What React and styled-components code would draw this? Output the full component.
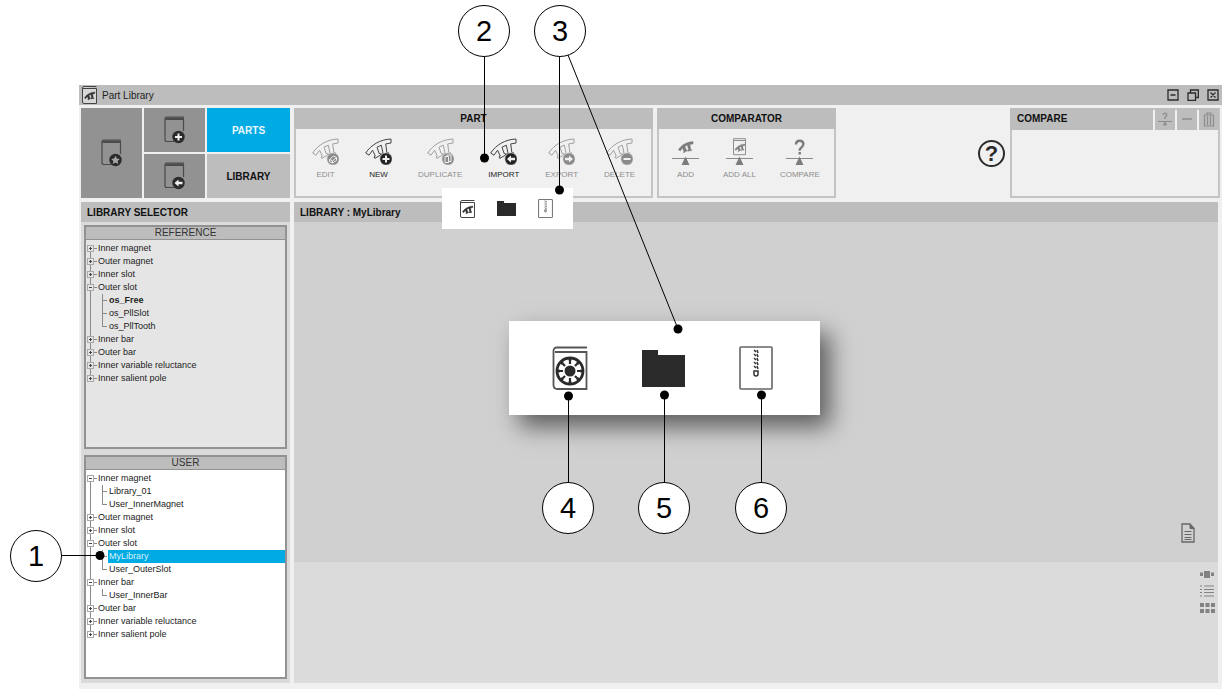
import React, { useState } from 'react';
import styled, { createGlobalStyle, css } from 'styled-components';

const GlobalStyle = createGlobalStyle`
	* {
		box-sizing: border-box;
	}
	body {
		margin: 0;
		background: #fff;
		color: #1c1c1c;
		font-family: 'Liberation Sans', Arial, sans-serif;
		font-size: 10px;
	}
	button {
		font: inherit;
		color: inherit;
		border: 0;
		padding: 0;
		background: none;
		cursor: pointer;
	}
	svg {
		display: block;
		flex: none;
	}
`;

/* page and window */

const Page = styled.div`
	position: relative;
	display: flex;
	flex-direction: column;
	min-height: 100vh;
	padding: 85px 8px 8px 79px;
	overflow: hidden;
`;
const Window = styled.main`
	flex: 1;
	display: flex;
	flex-direction: column;
	background: #f0f0f0;
`;
const TitleBar = styled.header`
	display: flex;
	align-items: center;
	gap: 5px;
	height: 20px;
	padding: 0 3px;
	background: #bdbdbd;
`;
const Title = styled.h1`
	flex: 1;
	margin: 0;
	font-size: 10px;
	font-weight: normal;
`;
const WindowControls = styled.div`
	display: flex;
	gap: 8px;
`;
const TopRow = styled.div`
	display: flex;
	gap: 4px;
	height: 90px;
	margin: 3px 2px 4px;
`;
const Content = styled.div`
	flex: 1;
	display: flex;
	gap: 4px;
	margin: 0 4px 6px 2px;
`;

/* top row */

const Modes = styled.nav`
	flex: none;
	display: grid;
	grid-template-columns: 61px 61px 1fr;
	grid-template-rows: 1fr 1fr;
	gap: 2px;
	width: 209px;
`;
const ModeButton = styled.button`
	display: flex;
	align-items: center;
	justify-content: center;
	background: #929292;
	grid-row: ${({ $tall }) => ($tall ? 'span 2' : 'auto')};
`;
const Tab = styled.button`
	font-weight: bold;
	background: ${({ $active }) => ($active ? '#00aae3' : '#bdbdbd')};
	color: ${({ $active }) => ($active ? '#e8f7fd' : '#111')};
`;
const Panel = styled.section`
	flex: none;
	width: ${({ $width }) => $width}px;
	border: 2px solid #c4c4c4;
`;
const PanelTitle = styled.h2`
	margin: -2px -2px 0;
	background: #bdbdbd;
	font-size: 10px;
	line-height: 21px;
	text-align: center;
	color: #111;
`;
const Tools = styled.div`
	display: flex;
	gap: ${({ $gap }) => $gap}px;
	padding: 9px 13px 0 ${({ $indent }) => $indent}px;
`;
const ToolButton = styled.button`
	display: flex;
	flex-direction: column;
	align-items: center;
	gap: 5px;
	min-width: 27px;
	font-size: 8px;
	line-height: 10px;
	white-space: nowrap;
	color: #222;
	&:disabled {
		color: #8e8e8e;
		cursor: default;
	}
`;
const HelpButton = styled.button`
	align-self: center;
	width: 27px;
	height: 27px;
	margin: 0 1px 0 auto;
	border: 2px solid #2b2b2b;
	border-radius: 50%;
	font-size: 22px;
	font-weight: bold;
	line-height: 23px;
	color: #2b2b2b;
`;
const CompareHeader = styled.div`
	display: flex;
	gap: 2px;
	height: 22px;
	margin: -2px -1px 0 -2px;
`;
const CompareTitle = styled.h2`
	flex: 1;
	margin: 0;
	padding-left: 7px;
	background: #bdbdbd;
	font-size: 10px;
	line-height: 22px;
	color: #111;
`;
const CompareButton = styled.button`
	display: flex;
	align-items: center;
	justify-content: center;
	width: 20px;
	background: #bdbdbd;
	color: #8e8e8e;
`;

/* library selector */

const Sidebar = styled.aside`
	flex: none;
	display: flex;
	flex-direction: column;
	width: 209px;
	background: #dadada;
`;
const SectionTitle = styled.h2`
	height: 20px;
	margin: 0;
	padding-left: 6px;
	background: #bdbdbd;
	font-size: 10px;
	line-height: 21px;
	color: #111;
`;
const Selectors = styled.div`
	flex: 1;
	display: flex;
	flex-direction: column;
	gap: 6px;
	padding: 3px 3px 4px;
`;
const TreeBox = styled.section`
	flex: 1;
	border: 2px solid #929292;
	background: ${({ $bg }) => $bg};
`;
const TreeTitle = styled.h3`
	margin: 0;
	border-bottom: 1px solid #929292;
	background: #bdbdbd;
	font-size: 10px;
	font-weight: normal;
	line-height: 12px;
	text-align: center;
	color: #333;
`;
const list = css`
	margin: 0;
	padding: 0;
	list-style: none;
`;
const Tree = styled.ul`
	${list}
	margin-top: 2px;
	background: linear-gradient(#8a8a8a, #8a8a8a) 4px 6px / 1px calc(100% - 13px) no-repeat;
	font-size: 9px;
`;
const Children = styled.ul`
	${list}
	padding-left: 16px;
`;
const Row = styled.div`
	display: flex;
	align-items: center;
	height: 13px;
`;
const Toggle = styled.button`
	display: flex;
	align-items: center;
	margin-left: 1px;
	svg {
		background: ${({ $bg }) => $bg};
	}
	&::after {
		content: '';
		width: 3px;
		height: 1px;
		background: #8a8a8a;
	}
`;
const Branch = styled.span`
	flex: none;
	width: 6px;
	height: 13px;
	background: linear-gradient(#8a8a8a, #8a8a8a) 0 0 / 1px ${({ $last }) => ($last ? '7px' : '13px')} no-repeat,
		linear-gradient(#8a8a8a, #8a8a8a) 0 6px / 5px 1px no-repeat;
`;
const Label = styled.button`
	flex: 1;
	height: 13px;
	padding-left: 1px;
	line-height: 13px;
	text-align: left;
	white-space: nowrap;
	font-weight: ${({ $bold }) => ($bold ? 'bold' : 'normal')};
	background: ${({ $selected }) => ($selected ? '#00aae3' : 'none')};
	color: ${({ $selected }) => ($selected ? '#d8f2fc' : '#222')};
`;

/* library view */

const Viewer = styled.section`
	flex: 1;
	display: grid;
	grid-template-rows: 20px 340fr 121fr;
`;
const Preview = styled.div`
	display: flex;
	align-items: flex-end;
	justify-content: flex-end;
	padding: 0 23px 19px;
	background: #d0d0d0;
`;
const Shelf = styled.div`
	display: flex;
	flex-direction: column;
	align-items: flex-end;
	gap: 6px;
	padding: 7px 3px;
	background: #dbdbdb;
`;

/* floating import menus and callouts */

const Popup = styled.div`
	position: absolute;
	left: ${({ $x }) => $x}px;
	top: ${({ $y }) => $y}px;
	display: flex;
	align-items: center;
	background: #fff;
`;
const SmallPopup = styled(Popup)`
	gap: 22px;
	width: 131px;
	height: 41px;
	padding-left: 18px;
`;
const LargePopup = styled(Popup)`
	gap: 54px;
	width: 311px;
	height: 94px;
	padding-left: 43px;
	box-shadow: 10px 12px 22px rgba(0, 0, 0, 0.55);
`;
const Leaders = styled.svg`
	position: absolute;
	inset: 0;
	width: 100%;
	height: 100%;
	pointer-events: none;
`;
const Callout = styled.span`
	position: absolute;
	left: ${({ $x }) => $x - 26}px;
	top: ${({ $y }) => $y - 26}px;
	width: 52px;
	height: 52px;
	border: 1px solid #000;
	border-radius: 50%;
	background: #fff;
	font-size: 29px;
	line-height: 51px;
	text-align: center;
	color: #000;
`;

/* icons */

const PART_PATH =
	'M.7 15C6 7 15 1.5 26 1v4L20.7 5.900 21.900 14.900 23.500 14.600 23.800 16.400 16.800 17.700 16.500 15.900 18.100 15.500 16.300 7.200 12 9.200 14.200 15.600 15.100 15.200 15.800 16.900 9.800 20.400 9 18.900 10.300 18.100 7.600 12.200 4 17.200z';

const BADGES = {
	edit: <path d="M17.5 21.5l4-3.5 3 1.5v3l-4 2.5-3-1.3zM17.5 21.5l3 1.3 4-3.3M20.5 22.8V25" fill="none" stroke="#f0f0f0" />,
	plus: <path d="M21 17.5v7M17.5 21h7" stroke="#f0f0f0" strokeWidth="2" />,
	copy: <path d="M18 18.5h3.5v6H18zM20 18.5v-1.5h4v6.5h-2.5" fill="none" stroke="#f0f0f0" />,
	left: <path d="M17 21l4-3.6v2.4h4v2.4h-4v2.4z" fill="#f0f0f0" />,
	right: <path d="M25 21l-4-3.6v2.4h-4v2.4h4v2.4z" fill="#f0f0f0" />,
	minus: <path d="M17.5 21h7" stroke="#f0f0f0" strokeWidth="2" />,
	star: <path d="M21 16.8l1.3 2.8 3 .3-2.2 2 .6 3-2.7-1.5-2.7 1.5.6-3-2.2-2 3-.3z" fill="#a8a8a8" />,
};

const PartIcon = ({ badge, disabled }) => (
	<svg width="27" height="27" viewBox="0 0 27 27">
		<path d={PART_PATH} fill="none" stroke={disabled ? '#a0a0a0' : '#444'} />
		<circle cx="21" cy="21" r="6.2" fill={disabled ? '#8a8a8a' : '#222'} stroke="#f0f0f0" strokeWidth="0.6" />
		{BADGES[badge]}
	</svg>
);

const BookIcon = ({ badge }) => (
	<svg width="22" height="28" viewBox="5 0 22 28">
		<path d="M25 1H7.500Q6 1 6 2.500V23.500Q6 25.500 8 25.500H15M6.500 3.500H24.500V15" fill="none" stroke="#4a4a4a" strokeWidth="1.200" />
		<path d="M7 2.200h18" stroke="#4a4a4a" strokeWidth="1.500" />
		<g transform="translate(-1.500 0)">
			<circle cx="21" cy="21" r="6.200" fill="#2b2b2b" />
			{BADGES[badge]}
		</g>
	</svg>
);

const SmallPart = ({ color = '#333', x = 0, y = 0, scale = 0.4 }) => (
	<path transform={`translate(${x} ${y}) scale(${scale})`} d={PART_PATH} fill={color} stroke={color} strokeWidth="0.700" />
);

const PartBookIcon = () => (
	<svg width="15" height="18" viewBox="0 0 15 18">
		<path d="M14.500 .5H2Q.5 .5 .5 2V16q0 1.500 1.500 1.500H14.500V2.500H1" fill="#fff" fillOpacity="0.400" stroke="#444" />
		<SmallPart x={2} y={5.5} scale={0.42} />
	</svg>
);

const BalanceIcon = ({ kind }) => (
	<svg width="27" height="27" viewBox="0 0 27 27">
		{kind === 'part' && <SmallPart color="#7c7c7c" x={6} y={3} scale={0.58} />}
		{kind === 'book' && (
			<>
				<path d="M7.500 .7h12v16h-12zM7.500 2.500h12" fill="none" stroke="#8e8e8e" />
				<SmallPart color="#7c7c7c" x={8.5} y={5.5} scale={0.4} />
			</>
		)}
		{kind === 'question' && (
			<path d="M10 6.500q0-3.700 3.700-3.700t3.700 3.300q0 2-2 3.300T13.700 12.700M13.700 14v2.500" fill="none" stroke="#7c7c7c" strokeWidth="2.400" />
		)}
		<path d="M0 20.500h27" stroke="#8a8a8a" />
		<path d="M13.500 18.500l4 8.500h-8z" fill="#7c7c7c" />
	</svg>
);

const FolderIcon = ({ width, height }) => (
	<svg width={width} height={height} viewBox="0 0 43 37" preserveAspectRatio="none">
		<path d="M0 0h16v5h27v32H0z" fill="#2a2a2a" />
	</svg>
);

const ZipIcon = ({ width, height, line }) => (
	<svg width={width} height={height} viewBox="0 0 34 44">
		<rect x="1" y="1" width="32" height="42" rx="1" fill="#fff" stroke="#666" strokeWidth={line} />
		<path
			d="M15 4l2 2M18 4l1 3M15 8l2 2M18 8l1 3M15 12l2 2M18 12l1 3M15 16l2 2M18 16l1 3M15 20l2 2M18 20l1 3"
			stroke="#333"
			strokeWidth="1.500"
		/>
		<path d="M15 25h4v3q0 2-2 2t-2-2z" fill="none" stroke="#333" strokeWidth="1.500" />
	</svg>
);

const RotorBookIcon = () => (
	<svg width="36" height="44" viewBox="0 0 36 44">
		<path d="M35 1.500H5Q1.500 1.500 1.500 5V39Q1.500 43 5.500 43H34.500V6H3" fill="none" stroke="#555" strokeWidth="1.800" />
		<circle cx="18" cy="25" r="13" fill="#fff" stroke="#2a2a2a" strokeWidth="2.800" />
		<circle cx="18" cy="25" r="5.500" fill="#2a2a2a" />
		{[0, 45, 90, 135, 180, 225, 270, 315].map((angle) => (
			<path key={angle} d="M18 18v-5M16.500 13.500h3" stroke="#2a2a2a" strokeWidth="2.200" transform={`rotate(${angle} 18 25)`} />
		))}
	</svg>
);

const controls = [
	{ name: 'Minimize', d: 'M1 1h10v10H1zM3.500 6h5' },
	{ name: 'Restore', d: 'M1 4h7.500v7.500H1zM3.500 4V1H11.300V8.500H8.500' },
	{ name: 'Close', d: 'M1 1h10v10H1zM3.500 3.500l5 5M8.500 3.500l-5 5' },
];

const partTools = [
	{ name: 'EDIT', badge: 'edit', disabled: true },
	{ name: 'NEW', badge: 'plus' },
	{ name: 'DUPLICATE', badge: 'copy', disabled: true },
	{ name: 'IMPORT', badge: 'left' },
	{ name: 'EXPORT', badge: 'right', disabled: true },
	{ name: 'DELETE', badge: 'minus', disabled: true },
];

const comparatorTools = [
	{ name: 'ADD', kind: 'part' },
	{ name: 'ADD ALL', kind: 'book' },
	{ name: 'COMPARE', kind: 'question' },
];

const referenceTree = [
	{ name: 'Inner magnet' },
	{ name: 'Outer magnet' },
	{ name: 'Inner slot' },
	{ name: 'Outer slot', children: ['os_Free', 'os_PllSlot', 'os_PllTooth'] },
	{ name: 'Inner bar' },
	{ name: 'Outer bar' },
	{ name: 'Inner variable reluctance' },
	{ name: 'Inner salient pole' },
];

const userTree = [
	{ name: 'Inner magnet', children: ['Library_01', 'User_InnerMagnet'] },
	{ name: 'Outer magnet' },
	{ name: 'Inner slot' },
	{ name: 'Outer slot', children: ['MyLibrary', 'User_OuterSlot'] },
	{ name: 'Inner bar', children: ['User_InnerBar'] },
	{ name: 'Outer bar' },
	{ name: 'Inner variable reluctance' },
	{ name: 'Inner salient pole' },
];

const callouts = [
	{ x: 36, y: 556 },
	{ x: 484, y: 31 },
	{ x: 560, y: 31 },
	{ x: 568, y: 508 },
	{ x: 664, y: 508 },
	{ x: 761, y: 508 },
];

const leaders = [
	[62, 555.5, 100, 555.5],
	[484.5, 57, 484.5, 158],
	[559.5, 57, 559.5, 190],
	[568, 55, 678, 329],
	[568.5, 482, 568.5, 396],
	[664.5, 482, 664.5, 395],
	[761.5, 482, 761.5, 395],
];

const LibraryTree = ({ title, nodes, bg, bold, selected, onSelect }) => (
	<TreeBox $bg={bg}>
		<TreeTitle>{title}</TreeTitle>
		<Tree>
			{nodes.map(({ name, children }) => (
				<li key={name}>
					<Row>
						<Toggle $bg={bg} aria-label={`Toggle ${name}`}>
							<svg width="7" height="7" viewBox="0 0 7 7">
								<rect x="0.5" y="0.5" width="6" height="6" fill="none" stroke="#a8a8a8" />
								<path d={children ? 'M2 3.500h3' : 'M2 3.500h3M3.500 2v3'} stroke="#444" />
							</svg>
						</Toggle>
						<Label>{name}</Label>
					</Row>
					{children && (
						<Children>
							{children.map((child, index) => (
								<li key={child}>
									<Row>
										<Branch $last={index === children.length - 1} />
										<Label $bold={child === bold} $selected={child === selected} onClick={() => onSelect(child)}>
											{child}
										</Label>
									</Row>
								</li>
							))}
						</Children>
					)}
				</li>
			))}
		</Tree>
	</TreeBox>
);

const App = () => {
	const [tab, setTab] = useState('PARTS');
	const [library, setLibrary] = useState('MyLibrary');

	return (
		<Page>
			<GlobalStyle />
			<Window>
				<TitleBar>
					<PartBookIcon />
					<Title>Part Library</Title>
					<WindowControls>
						{controls.map(({ name, d }) => (
							<button key={name} aria-label={name}>
								<svg width="12" height="12" viewBox="0 0 12 12">
									<path d={d} fill="none" stroke="#2b2b2b" strokeWidth="1.300" />
								</svg>
							</button>
						))}
					</WindowControls>
				</TitleBar>

				<TopRow>
					<Modes>
						<ModeButton $tall aria-label="Favourite library">
							<BookIcon badge="star" />
						</ModeButton>
						<ModeButton aria-label="New library">
							<BookIcon badge="plus" />
						</ModeButton>
						<Tab $active={tab === 'PARTS'} onClick={() => setTab('PARTS')}>
							PARTS
						</Tab>
						<ModeButton aria-label="Import library">
							<BookIcon badge="left" />
						</ModeButton>
						<Tab $active={tab === 'LIBRARY'} onClick={() => setTab('LIBRARY')}>
							LIBRARY
						</Tab>
					</Modes>

					<Panel $width={359}>
						<PanelTitle>PART</PanelTitle>
						<Tools $gap={26} $indent={16}>
							{partTools.map(({ name, badge, disabled }) => (
								<ToolButton key={name} disabled={disabled}>
									<PartIcon badge={badge} disabled={disabled} />
									{name}
								</ToolButton>
							))}
						</Tools>
					</Panel>

					<Panel $width={179}>
						<PanelTitle>COMPARATOR</PanelTitle>
						<Tools $gap={24} $indent={13}>
							{comparatorTools.map(({ name, kind }) => (
								<ToolButton key={name} disabled>
									<BalanceIcon kind={kind} />
									{name}
								</ToolButton>
							))}
						</Tools>
					</Panel>

					<HelpButton aria-label="Help">?</HelpButton>

					<Panel $width={210}>
						<CompareHeader>
							<CompareTitle>COMPARE</CompareTitle>
							<CompareButton aria-label="Compare parts">
								<svg width="14" height="14" viewBox="0 0 14 14" fill="none" stroke="currentColor">
									<path d="M5.300 3q0-1.700 1.800-1.700T8.800 3Q8.800 4 7 5.200V7" strokeWidth="1.400" />
									<path d="M0 9.500h14" />
									<path d="M7 10l1.500 3h-3z" fill="currentColor" />
								</svg>
							</CompareButton>
							<CompareButton aria-label="Remove part">
								<svg width="10" height="2" viewBox="0 0 10 2">
									<path d="M0 1h10" stroke="currentColor" strokeWidth="1.500" />
								</svg>
							</CompareButton>
							<CompareButton aria-label="Clear comparison">
								<svg width="12" height="15" viewBox="0 0 12 15">
									<path d="M1 3h10M4 3V1h4v2M1.500 3v11h9V3M4.500 4v9M7.500 4v9" fill="none" stroke="currentColor" strokeWidth="1.200" />
								</svg>
							</CompareButton>
						</CompareHeader>
					</Panel>
				</TopRow>

				<Content>
					<Sidebar>
						<SectionTitle>LIBRARY SELECTOR</SectionTitle>
						<Selectors>
							<LibraryTree title="REFERENCE" nodes={referenceTree} bg="#e5e5e5" bold="os_Free" selected={library} onSelect={setLibrary} />
							<LibraryTree title="USER" nodes={userTree} bg="#ffffff" selected={library} onSelect={setLibrary} />
						</Selectors>
					</Sidebar>

					<Viewer>
						<SectionTitle>LIBRARY : {library}</SectionTitle>
						<Preview>
							<button aria-label="Report">
								<svg width="14" height="20" viewBox="0 0 14 20" fill="none" stroke="#666">
									<path d="M1 1h8l4 4.500V19H1z" strokeWidth="1.300" />
									<path d="M9 1v4.500h4z" fill="#666" />
									<path d="M3.500 8.500h7M3.500 11.500h7M3.500 14.500h7M3.500 16.500h7" />
								</svg>
							</button>
						</Preview>
						<Shelf>
							<button aria-label="Carousel view">
								<svg width="16" height="10" viewBox="0 0 16 10" fill="#828282">
									<path d="M1 3.500h3v3.500H1zM5 2h6v7H5zM12 3.500h3v3.500h-3z" />
								</svg>
							</button>
							<button aria-label="List view">
								<svg width="15" height="12" viewBox="0 0 15 12" stroke="#828282">
									<path d="M0 1h2M4 1h10M0 4.500h2M4 4.500h10M0 7.500h2M4 7.500h10M0 11h2M4 11h10" />
								</svg>
							</button>
							<button aria-label="Grid view">
								<svg width="15" height="10" viewBox="0 0 15 10" fill="#828282">
									<path d="M0 0h4v4H0zM5.500 0h4v4h-4zM11 0h4v4h-4zM0 6h4v4H0zM5.500 6h4v4h-4zM11 6h4v4h-4z" />
								</svg>
							</button>
						</Shelf>
					</Viewer>
				</Content>
			</Window>

			<SmallPopup $x={442} $y={188}>
				<button aria-label="Import from library">
					<PartBookIcon />
				</button>
				<button aria-label="Import from folder">
					<FolderIcon width={19} height={15} />
				</button>
				<button aria-label="Import from archive">
					<ZipIcon width={15} height={19} line={2.2} />
				</button>
			</SmallPopup>

			<LargePopup $x={509} $y={321}>
				<button aria-label="Import from library">
					<RotorBookIcon />
				</button>
				<button aria-label="Import from folder">
					<FolderIcon width={43} height={37} />
				</button>
				<button aria-label="Import from archive">
					<ZipIcon width={34} height={44} line={1.6} />
				</button>
			</LargePopup>

			<Leaders>
				{leaders.map(([x1, y1, x2, y2]) => (
					<g key={`${x1}-${y2}`}>
						<line x1={x1} y1={y1} x2={x2} y2={y2} stroke="#000" />
						<circle cx={x2} cy={y2} r="4.500" />
					</g>
				))}
			</Leaders>
			{callouts.map(({ x, y }, index) => (
				<Callout key={x} $x={x} $y={y}>
					{index + 1}
				</Callout>
			))}
		</Page>
	);
};

export default App;
